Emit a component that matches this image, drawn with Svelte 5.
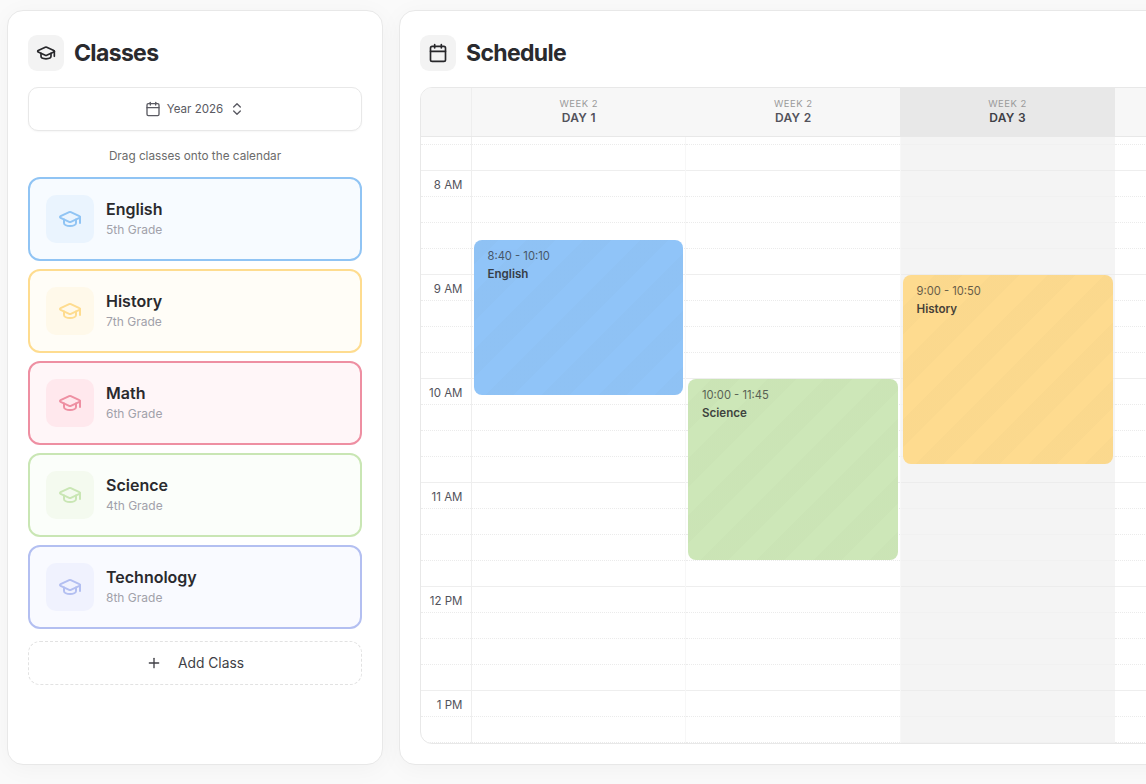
<script>
  const classes = [
    { name: 'English', grade: '5th Grade', c: 'blue' },
    { name: 'History', grade: '7th Grade', c: 'yellow' },
    { name: 'Math', grade: '6th Grade', c: 'red' },
    { name: 'Science', grade: '4th Grade', c: 'green' },
    { name: 'Technology', grade: '8th Grade', c: 'indigo' }
  ];
  const START = 450; // 7:30, minutes from midnight
  const slots = [];
  for (let m = START; m < 14 * 60; m += 15) {
    const h = Math.floor(m / 60);
    const isHourStart = m % 60 === 0;
    const h12 = h > 12 ? h - 12 : h;
    slots.push({ last: m % 60 === 45, label: isHourStart ? `${h12} ${h >= 12 ? 'PM' : 'AM'}` : '' });
  }
  const days = [
    { d: 'DAY 1', events: [{ t: '8:40 - 10:10', n: 'English', s: 520, e: 610, c: 'blue' }] },
    { d: 'DAY 2', events: [{ t: '10:00 - 11:45', n: 'Science', s: 600, e: 705, c: 'green' }] },
    { d: 'DAY 3', today: true, events: [{ t: '9:00 - 10:50', n: 'History', s: 540, e: 650, c: 'yellow' }] },
    { d: '', events: [] }
  ];
  const px = (min) => (min / 15) * 26;
</script>

{#snippet cap()}
  <path d="M21.42 10.922a1 1 0 0 0-.019-1.838L12.83 5.18a2 2 0 0 0-1.66 0L2.6 9.08a1 1 0 0 0 0 1.832l8.57 3.908a2 2 0 0 0 1.66 0z" />
  <path d="M22 10v6" />
  <path d="M6 12.5V16a6 3 0 0 0 12 0v-3.5" />
{/snippet}
{#snippet calendar()}
  <path d="M8 2v4" /><path d="M16 2v4" /><rect x="3" y="4" width="18" height="18" rx="2" /><path d="M3 10h18" />
{/snippet}

<div class="page">
  <aside class="panel left">
    <header class="head">
      <span class="head-icon"><svg class="i20" viewBox="0 0 24 24">{@render cap()}</svg></span>
      <h2>Classes</h2>
    </header>
    <button class="year">
      <svg class="i16" viewBox="0 0 24 24">{@render calendar()}</svg>
      <span>Year 2026</span>
      <svg class="i16 chev" viewBox="0 0 24 24"><path d="m7 15 5 5 5-5" /><path d="m7 9 5-5 5 5" /></svg>
    </button>
    <p class="hint">Drag classes onto the calendar</p>
    <div class="cards">
      {#each classes as k}
        <div class="card {k.c}">
          <span class="card-icon"><svg class="i24" viewBox="0 0 24 24">{@render cap()}</svg></span>
          <div class="card-text">
            <div class="card-name">{k.name}</div>
            <div class="card-grade">{k.grade}</div>
          </div>
        </div>
      {/each}
    </div>
    <button class="add">
      <svg class="i16" viewBox="0 0 24 24"><path d="M5 12h14" /><path d="M12 5v14" /></svg>
      <span>Add Class</span>
    </button>
  </aside>

  <main class="panel right">
    <header class="head">
      <span class="head-icon"><svg class="i20" viewBox="0 0 24 24">{@render calendar()}</svg></span>
      <h2>Schedule</h2>
    </header>
    <section class="cal">
      <div class="cal-head">
        <div class="corner"></div>
        {#each days as day}
          <div class="day-head" class:today={day.today}>
            {#if day.d}
              <span class="wk">WEEK 2</span>
              <span class="dn">{day.d}</span>
            {/if}
          </div>
        {/each}
      </div>
      <div class="cal-body">
        <div class="grid">
          <div class="times">
            {#each slots as s}
              <div class="slot" class:last={s.last}>{#if s.label}<span class="time">{s.label}</span>{/if}</div>
            {/each}
          </div>
          {#each days as day}
            <div class="col" class:today={day.today}>
              {#each slots as s}
                <div class="slot" class:last={s.last}></div>
              {/each}
              {#each day.events as ev}
                <div class="event {ev.c}" style="top:{px(ev.s - START)}px;height:{px(ev.e - ev.s) - 1.5}px">
                  <div class="ev-time">{ev.t}</div>
                  <div class="ev-name">{ev.n}</div>
                </div>
              {/each}
            </div>
          {/each}
        </div>
      </div>
    </section>
  </main>
</div>

<style>
  :global(html), :global(body) { margin: 0; overflow: hidden; background: #fafafa; }
  .page {
    display: flex; gap: 16px; width: max-content; height: 784px; box-sizing: border-box;
    padding: 10px 0 19px 7px;
    font-family: "Inter", "Liberation Sans", sans-serif; color: #27272a;
  }
  .panel {
    background: #fff; border: 1px solid #e8e8e8; border-radius: 16px; box-sizing: border-box;
    box-shadow: 0 4px 24px rgba(0, 0, 0, .04); padding: 24px 20px 20px; display: flex; flex-direction: column;
  }
  .left { width: 376px; }
  .head { display: flex; align-items: center; gap: 10px; height: 36px; margin-bottom: 16px; }
  .head-icon {
    width: 36px; height: 36px; border-radius: 9px; background: #f3f3f3;
    display: flex; align-items: center; justify-content: center;
  }
  h2 { margin: 0; font-size: 23px; font-weight: 700; letter-spacing: -.65px; color: #2a2a2e; }
  svg { fill: none; stroke: currentColor; stroke-width: 2; stroke-linecap: round; stroke-linejoin: round; display: block; }
  .i20 { width: 20px; height: 20px; }
  .i16 { width: 16px; height: 16px; }
  .i24 { width: 24px; height: 24px; }
  button { font: inherit; margin: 0; cursor: pointer; }
  .year {
    height: 44px; background: #fff; border: 1px solid #e8e8e8; border-radius: 10px;
    box-shadow: 0 1px 2px rgba(0, 0, 0, .04); display: flex; align-items: center; justify-content: center;
    gap: 6px; font-size: 11.6px; color: #5a5a62;
  }
  .hint { margin: 17px 0 13px; height: 16px; line-height: 16px; font-size: 11.75px; text-align: center; color: #6b6b6b; }
  .cards { display: flex; flex-direction: column; gap: 8px; }
  .card {
    height: 84px; box-sizing: border-box; border: 2px solid var(--c); border-radius: 12px; background: var(--bg);
    display: flex; align-items: center; gap: 12px; padding: 0 16px;
  }
  .card-icon {
    width: 48px; height: 48px; border-radius: 10px; background: var(--ic); color: var(--c);
    display: flex; align-items: center; justify-content: center;
  }
  .card-text { padding-bottom: 2px; }
  .card-name { font-size: 16px; font-weight: 600; line-height: 20px; color: #2a2a2e; }
  .card-grade { font-size: 12px; line-height: 16px; margin-top: 3px; color: #a1a1aa; }
  .blue { --c: #90c4f4; --bg: #f7fbff; --ic: #eaf4fe; --e: #90c4f8; }
  .yellow { --c: #fedc8f; --bg: #fffdf7; --ic: #fff9ea; --e: #fedb8f; }
  .red { --c: #ee8fa2; --bg: #fff6f8; --ic: #ffe8ed; --e: #ee8fa2; }
  .green { --c: #c9e6b4; --bg: #fbfefa; --ic: #f4faef; --e: #cde7b8; }
  .indigo { --c: #b3bff1; --bg: #f9faff; --ic: #f0f2fe; --e: #b3bff1; }
  .add {
    margin-top: 12px; height: 44px; border: 1px dashed #e2e2e2; border-radius: 12px; background: #fff;
    display: flex; align-items: center; justify-content: center; gap: 16px; font-size: 13.8px; color: #3f3f46;
  }
  .right { width: 1290px; padding-top: 24px; padding-bottom: 20px; }
  .cal {
    flex: 1; min-height: 0; border: 1px solid #e8e8e8; border-radius: 12px; overflow: hidden;
    display: flex; flex-direction: column; background: #fff;
  }
  .cal-head { display: grid; grid-template-columns: 50.5px repeat(4, 214.5px) 1fr; height: 49px; box-sizing: border-box; background: #f7f7f7; border-bottom: 1px solid #e8e8e8; flex: none; }
  .corner { border-right: 1px solid #eeeeee; }
  .day-head { display: flex; flex-direction: column; align-items: center; justify-content: center; padding-bottom: 2px; }
  .day-head.today { background: #e8e8e8; margin-left: -.5px; }
  .wk { font-size: 9.5px; line-height: 13px; letter-spacing: .5px; color: #9a9a9a; }
  .dn { font-size: 12px; line-height: 15px; font-weight: 600; letter-spacing: .3px; color: #52525b; }
  .day-head.today .dn { color: #3f3f46; }
  .cal-body { flex: 1; min-height: 0; overflow: hidden; }
  .grid { display: grid; grid-template-columns: 50.5px repeat(4, 214.5px) 1fr; margin-top: -18px; }
  .times { border-right: 1px solid #eeeeee; }
  .col { position: relative; border-right: 1px solid #f7f7f7; }
  .col.today { background: #f4f4f4; border-right: none; }
  .slot { height: 26px; box-sizing: border-box; border-bottom: 1px dotted #ebebeb; }
  .slot.last { border-bottom: 1px solid #eeeeee; }
  .today .slot { border-bottom-color: #f1f1f1; border-bottom-style: solid; }
  .today .slot.last { border-bottom-color: #ececec; }
  .times .slot { text-align: right; padding-right: 8px; }
  .time { display: block; font-size: 11.5px; line-height: 14px; padding-top: 7px; color: #52525b; }
  .event {
    position: absolute; left: 2px; right: 1.75px; box-sizing: border-box; border-radius: 8px; padding: 9px 14px;
    overflow: hidden; color: #27272a; background-color: var(--e);
    background-image: repeating-linear-gradient(-45deg, rgba(90, 90, 60, .018) 0 20px, transparent 20px 40px);
  }
  .ev-time { font-size: 11.2px; line-height: 14px; opacity: .7; }
  .ev-name { font-size: 11.6px; line-height: 16px; font-weight: 600; margin-top: 3px; opacity: .85; }
</style>
